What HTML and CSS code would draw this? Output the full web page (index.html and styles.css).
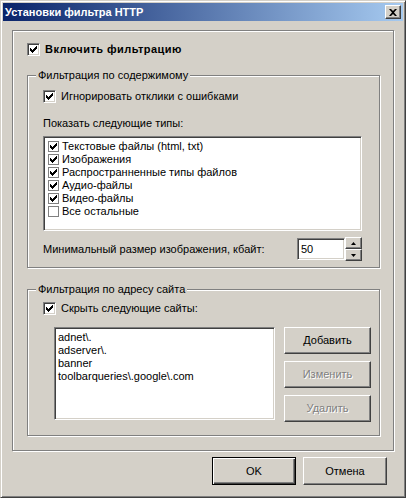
FILE: index.html
```html
<!DOCTYPE html>
<html lang="ru">
<head>
<meta charset="utf-8">
<title>Установки фильтра HTTP</title>
<link rel="stylesheet" href="styles.css">
</head>
<body>
<div class="window">
  <div class="titlebar">
    <span class="title">Установки фильтра HTTP</span>
    <span class="close"><svg width="8" height="7" viewBox="0 0 8 7"><path d="M0 0h2l2 2 2-2h2L5 3.5 8 7H6L4 5 2 7H0l3-3.5z" fill="#000"/></svg></span>
  </div>
  <div class="client">
    <div class="frame">
      <div class="chkrow bold"><span class="cb checked"></span><span>Включить фильтрацию</span></div>

      <div class="group g1">
        <span class="legend">Фильтрация по содержимому</span>
        <div class="chkrow"><span class="cb checked"></span><span>Игнорировать отклики с ошибками</span></div>
        <div class="caption">Показать следующие типы:</div>
        <div class="listbox types">
          <div class="item"><span class="lcb checked"></span>Текстовые файлы (html, txt)</div>
          <div class="item"><span class="lcb checked"></span>Изображения</div>
          <div class="item"><span class="lcb checked"></span>Распространненные типы файлов</div>
          <div class="item"><span class="lcb checked"></span>Аудио-файлы</div>
          <div class="item"><span class="lcb checked"></span>Видео-файлы</div>
          <div class="item"><span class="lcb"></span>Все остальные</div>
        </div>
        <div class="sizerow">
          <span>Минимальный размер изображения, кбайт:</span>
          <div class="spinner">
            <div class="edit">50</div>
            <div class="arrows">
              <span class="arrow up"><svg width="5" height="3" viewBox="0 0 5 3"><path d="M2.5 0L5 3H0z" fill="#000"/></svg></span>
              <span class="arrow down"><svg width="5" height="3" viewBox="0 0 5 3"><path d="M0 0h5L2.5 3z" fill="#000"/></svg></span>
            </div>
          </div>
        </div>
      </div>

      <div class="group g2">
        <span class="legend">Фильтрация по адресу сайта</span>
        <div class="chkrow"><span class="cb checked"></span><span>Скрыть следующие сайты:</span></div>
        <div class="sites">
          <div class="listbox sitelist">
            <div class="line">adnet\.</div>
            <div class="line">adserver\.</div>
            <div class="line">banner</div>
            <div class="line">toolbarqueries\.google\.com</div>
          </div>
          <div class="sidebtns">
            <div class="btn">Добавить</div>
            <div class="btn disabled">Изменить</div>
            <div class="btn disabled">Удалить</div>
          </div>
        </div>
      </div>
    </div>
    <div class="footer">
      <div class="btn default">OK</div>
      <div class="btn">Отмена</div>
    </div>
  </div>
</div>
</body>
</html>
```

FILE: styles.css
```css
* { box-sizing: border-box; }

html, body {
  margin: 0;
  padding: 0;
  background: #d4d0c8;
}

body {
  font-family: "Liberation Sans", Arial, sans-serif;
  font-size: 11px;
  line-height: 13px;
  color: #000;
}

.window {
  width: 406px;
  height: 498px;
  background: #d4d0c8;
  border: 1px solid;
  border-color: #d4d0c8 #404040 #404040 #d4d0c8;
  box-shadow: inset 1px 1px 0 #fff, inset -1px -1px 0 #808080;
  padding: 2px;
  display: flex;
  flex-direction: column;
}

.titlebar {
  height: 18px;
  flex: none;
  background: linear-gradient(to right, #0a246a, #a6caf0);
  display: flex;
  align-items: center;
  justify-content: space-between;
  padding: 0 2px 0 2px;
}

.title {
  color: #fff;
  font-weight: bold;
  font-size: 11px;
}

.close {
  width: 16px;
  height: 14px;
  background: #d4d0c8;
  border: 1px solid;
  border-color: #fff #404040 #404040 #fff;
  box-shadow: inset -1px -1px 0 #808080;
  display: flex;
  align-items: center;
  justify-content: center;
}

.client {
  flex: 1;
  padding: 9px 9px 0 9px;
  display: flex;
  flex-direction: column;
}

.frame {
  height: 421px;
  border: 1px solid #808080;
  box-shadow: inset 1px 1px 0 #fff, 1px 1px 0 #fff;
  padding: 12px 13px 0 14px;
}

.chkrow {
  display: flex;
  align-items: center;
  height: 13px;
  white-space: nowrap;
}

.bold {
  font-weight: bold;
  letter-spacing: 0.45px;
}

.cb {
  width: 13px;
  height: 13px;
  flex: none;
  margin-right: 5px;
  background: #fff;
  border: 1px solid;
  border-color: #808080 #fff #fff #808080;
  box-shadow: inset 1px 1px 0 #404040, inset -1px -1px 0 #d4d0c8;
  position: relative;
}

.cb.checked::after,
.lcb.checked::after {
  content: "";
  position: absolute;
  left: 2px;
  top: 1px;
  width: 7px;
  height: 7px;
  background: url("data:image/svg+xml;utf8,<svg xmlns='http://www.w3.org/2000/svg' width='7' height='7' viewBox='0 0 7 7'><path d='M0 2h1v1h1v1h1V3h1V2h1V1h1V0h1v3H6v1H5v1H4v1H3v1H2V6H1V5H0z' fill='black'/></svg>") no-repeat;
}

.cb.checked::after { left: 2px; top: 2px; }

.group {
  position: relative;
  border: 1px solid #808080;
  box-shadow: inset 1px 1px 0 #fff, 1px 1px 0 #fff;
}

.legend {
  position: absolute;
  left: 8px;
  top: -7px;
  padding: 0 2px;
  background: #d4d0c8;
  white-space: nowrap;
}

.g1 {
  margin-top: 19px;
  height: 193px;
  padding: 14px 0 0 15px;
}

.caption {
  margin-top: 14px;
  height: 13px;
}

.listbox {
  background: #fff;
  border: 1px solid;
  border-color: #808080 #fff #fff #808080;
  box-shadow: inset 1px 1px 0 #404040, inset -1px -1px 0 #d4d0c8;
}

.types {
  margin-top: 6px;
  width: 319px;
  height: 95px;
  padding: 3px 2px 0 4px;
}

.item {
  display: flex;
  align-items: center;
  height: 13px;
  white-space: nowrap;
}

.lcb {
  width: 11px;
  height: 11px;
  flex: none;
  margin-right: 3px;
  border: 1px solid #808080;
  background: #fff;
  position: relative;
}

.lcb.checked::after { left: 1px; top: 1px; }

.sizerow {
  margin-top: 6px;
  width: 319px;
  display: flex;
  align-items: center;
  justify-content: space-between;
  height: 24px;
}

.spinner {
  display: flex;
  height: 22px;
}

.edit {
  width: 48px;
  height: 22px;
  background: #fff;
  border: 1px solid;
  border-color: #808080 #fff #fff #808080;
  box-shadow: inset 1px 1px 0 #404040, inset -1px -1px 0 #d4d0c8;
  padding: 4px 0 0 3px;
}

.arrows {
  display: flex;
  flex-direction: column;
  justify-content: space-between;
  width: 17px;
  height: 24px;
  margin-top: -1px;
}

.arrow {
  height: 12px;
  background: #d4d0c8;
  border: 1px solid;
  border-color: #fff #404040 #404040 #fff;
  box-shadow: inset -1px -1px 0 #808080;
  display: flex;
  align-items: center;
  justify-content: center;
}

.g2 {
  margin-top: 21px;
  height: 147px;
  padding: 12px 0 0 15px;
}

.sites {
  display: flex;
  margin-top: 12px;
  margin-left: 11px;
}

.sitelist {
  width: 221px;
  height: 93px;
  padding: 3px 3px 0 3px;
}

.line {
  height: 13px;
  white-space: nowrap;
}

.sidebtns {
  margin-left: 9px;
  display: flex;
  flex-direction: column;
  gap: 7px;
}

.btn {
  width: 87px;
  height: 27px;
  background: #d4d0c8;
  border: 1px solid;
  border-color: #fff #404040 #404040 #fff;
  box-shadow: inset -1px -1px 0 #808080;
  display: flex;
  align-items: center;
  justify-content: center;
  white-space: nowrap;
}

.btn.disabled {
  color: #808080;
  text-shadow: 1px 1px 0 #fff;
}

.footer {
  display: flex;
  justify-content: flex-end;
  gap: 7px;
  margin-top: 6px;
  padding-right: 7px;
}

.footer .btn {
  width: 84px;
  height: 28px;
}

.btn.default {
  border: 1px solid #000;
  box-shadow: inset 1px 1px 0 #fff, inset -1px -1px 0 #404040, inset -2px -2px 0 #808080;
}
```
